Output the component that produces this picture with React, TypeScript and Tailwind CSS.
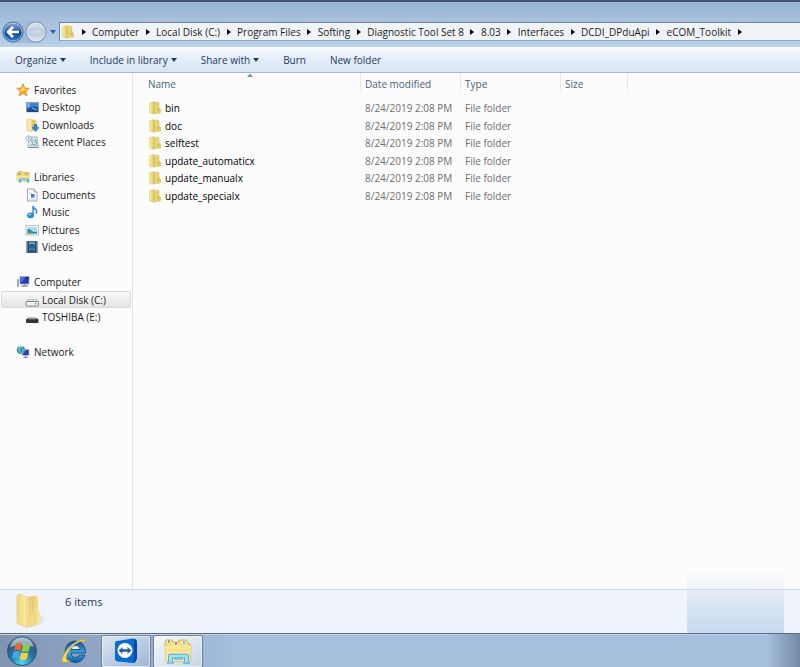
import React from "react";

type IconProps = { className?: string };

function FolderIcon({ className = "" }: IconProps) {
  return (
    <svg viewBox="0 0 14 14" className={className} aria-hidden="true">
      <defs>
        <linearGradient id="folderFront" x1="0" y1="0" x2="1" y2="0">
          <stop offset="0" stopColor="#faf3ae" />
          <stop offset="1" stopColor="#d6bd4c" />
        </linearGradient>
        <linearGradient id="folderBack" x1="0" y1="0" x2="1" y2="0">
          <stop offset="0" stopColor="#f2e58c" />
          <stop offset="1" stopColor="#dcc45c" />
        </linearGradient>
      </defs>
      <path d="M6 1.500 L10 1 L11 2 L11 7 L12.500 8 L12.500 12 L6 12.800Z" fill="url(#folderBack)" stroke="#d3be62" strokeWidth="0.500" />
      <path d="M9 9 H11" stroke="#c3a848" strokeWidth="1" fill="none" />
      <path d="M1.500 1.800 L5.500 .6 L7 1.500 L7 12.500 L6 13.300 L1.500 12Z" fill="url(#folderFront)" stroke="#d6c368" strokeWidth="0.500" />
    </svg>
  );
}

function BigFolderIcon({ className = "" }: IconProps) {
  return (
    <svg viewBox="0 0 32 36" className={className} aria-hidden="true">
      <defs>
        <linearGradient id="bigFront" x1="0" y1="0" x2="1" y2="0">
          <stop offset="0" stopColor="#f3d77b" />
          <stop offset="1" stopColor="#fbeeb5" />
        </linearGradient>
        <linearGradient id="bigBack" x1="0" y1="0" x2="1" y2="1">
          <stop offset="0" stopColor="#e6c665" />
          <stop offset="1" stopColor="#fbeaa6" />
        </linearGradient>
        <linearGradient id="bigShade" x1="0" y1="0" x2="1" y2="0">
          <stop offset="0" stopColor="#8b95a5" stopOpacity="0.700" />
          <stop offset="1" stopColor="#c8d0dc" stopOpacity="0" />
        </linearGradient>
      </defs>
      <path d="M20 24 L26 22 L32 27 L22 32 L14 34Z" fill="url(#bigShade)" />
      <path d="M11 4 L20 2.500 L22 5 L22 18 L24 20 L24 29 L22 32 L12 33Z" fill="url(#bigBack)" />
      <path d="M17 6 V20 L19 22 V31" stroke="#e2c468" strokeWidth="0.800" fill="none" />
      <path d="M1 3 L3 1 L11 4 L13 6 L13 34 L11 35 L1 30Z" fill="url(#bigFront)" stroke="#e3c568" strokeWidth="0.600" />
      <path d="M11 6 V34" stroke="#e2bf60" strokeWidth="0.800" />
    </svg>
  );
}

function StarIcon({ className = "" }: IconProps) {
  return (
    <svg viewBox="0 0 14 14" className={className} aria-hidden="true">
      <path d="M7 .8 L8.700 5 L13.300 5.300 L9.800 8.300 L11 13 L7 10.500 L3 13 L4.200 8.300 L.7 5.300 L5.300 5Z" fill="#f9a929" stroke="#ea8a28" strokeWidth="0.800" strokeLinejoin="round" />
      <path d="M7 3 L8 6 L10.500 6.300 L6 8.500 L3.500 6.300 L6 6Z" fill="#fde27c" />
    </svg>
  );
}

function DesktopIcon({ className = "" }: IconProps) {
  return (
    <svg viewBox="0 0 14 14" className={className} aria-hidden="true">
      <rect x="1.500" y="2.500" width="12" height="9.500" fill="#1c55a6" stroke="#7d99bd" strokeWidth="0.600" />
      <path d="M2 3 H13 V7 Q8 5 2 9Z" fill="#3f86d5" />
      <path d="M2.500 4 H4.500 M2.500 6 H4.500" stroke="#d6ecff" />
      <path d="M2 11 H13" stroke="#173765" strokeWidth="1.200" />
      <path d="M7 8 L12 10" stroke="#83bdf0" />
    </svg>
  );
}

function DownloadsIcon({ className = "" }: IconProps) {
  return (
    <svg viewBox="0 0 14 14" className={className} aria-hidden="true">
      <path d="M5 2 L10 1.500 L11.500 3 V12 L5 13Z" fill="#e6c85e" />
      <path d="M2 1.500 L6 1 L7 2 V13.500 L2 12.500Z" fill="#faebad" stroke="#d8b95a" strokeWidth="0.600" />
      <path d="M9 6.500 H12 V9.500 H14 L10.500 13.500 L7 9.500 H9Z" fill="#2589dc" stroke="#165ba5" strokeWidth="0.500" />
    </svg>
  );
}

function RecentIcon({ className = "" }: IconProps) {
  return (
    <svg viewBox="0 0 14 14" className={className} aria-hidden="true">
      <path d="M4 2 H12 L13.500 12.500 H3Z" fill="#dfe8ed" stroke="#8b9aa5" strokeWidth="0.700" />
      <path d="M7 4 L7 8 L10 11 M10 4 L10 8 M5 10 H12" stroke="#81a5b8" strokeWidth="1" fill="none" />
      <path d="M10.500 5 L11.500 9" stroke="#65ab79" />
      <circle cx="3.500" cy="3.500" r="2.700" fill="#eef5f8" stroke="#8ba2ac" strokeWidth="0.800" />
      <path d="M3.500 2 V3.700 H5" stroke="#547282" strokeWidth="0.600" fill="none" />
      <path d="M3 12.500 H13" stroke="#7e878c" />
    </svg>
  );
}

function LibrariesIcon({ className = "" }: IconProps) {
  return (
    <svg viewBox="0 0 14 14" className={className} aria-hidden="true">
      <path d="M1 3 L2 1.500 H6 L7 2.500 H13 V11 H1Z" fill="#f0d876" stroke="#c9ad4c" strokeWidth="0.600" />
      <path d="M2 4 H5" stroke="#63b061" strokeWidth="1.200" />
      <path d="M9 4 H12" stroke="#de8854" strokeWidth="1" />
      <path d="M1 6 H13 V11.500 H1Z" fill="#f6e594" />
      <path d="M4 12.500 V9.500 H12 V12.500" stroke="#4aafd2" strokeWidth="2.200" fill="none" />
      <path d="M4 9.500 H12" stroke="#a5e3f3" strokeWidth="0.800" />
    </svg>
  );
}

function DocumentIcon({ className = "" }: IconProps) {
  return (
    <svg viewBox="0 0 14 14" className={className} aria-hidden="true">
      <path d="M2.500 1 H9 L12 4 V13 H2.500Z" fill="#fbfcfe" stroke="#8193a8" strokeWidth="0.800" />
      <path d="M9 1 V4 H12" fill="#d4dfeb" stroke="#8193a8" strokeWidth="0.700" />
      <path d="M4 5 H7 M4 11 H10" stroke="#b1c6dd" strokeWidth="0.800" />
      <rect x="6" y="6" width="3.500" height="3.500" fill="#3978bd" />
    </svg>
  );
}

function MusicIcon({ className = "" }: IconProps) {
  return (
    <svg viewBox="0 0 14 14" className={className} aria-hidden="true">
      <ellipse cx="5.500" cy="10.300" rx="3.500" ry="2.900" fill="#1f88d2" />
      <ellipse cx="4.700" cy="9.500" rx="1.600" ry="1" fill="#8cd1f6" />
      <path d="M8 10 V1 Q8.700 3.500 10.800 4.500 Q12.500 6 10.800 8.500" stroke="#2d8ed3" strokeWidth="1.500" fill="none" />
    </svg>
  );
}

function PictureIcon({ className = "" }: IconProps) {
  return (
    <svg viewBox="0 0 14 14" className={className} aria-hidden="true">
      <rect x="1" y="2.500" width="12.500" height="9.500" fill="#fff" stroke="#8fa5b8" strokeWidth="0.700" />
      <rect x="2.500" y="4" width="9.500" height="6.500" fill="#a4daf3" />
      <path d="M2.500 6 Q5 6 7 8 T12 8.500 V10.500 H2.500Z" fill="#28789a" />
      <path d="M2.500 8.500 Q6 7.500 9 10.500 H2.500Z" fill="#4a9e74" />
    </svg>
  );
}

function VideoIcon({ className = "" }: IconProps) {
  return (
    <svg viewBox="0 0 14 14" className={className} aria-hidden="true">
      <rect x="1.500" y="1" width="11" height="12" fill="#263d55" />
      <rect x="4" y="1.500" width="6" height="5" fill="#5ba4d9" />
      <rect x="4" y="7.500" width="6" height="5" fill="#347bb4" />
      <path d="M4 5 L7 3.500 L10 5.500 V6.500 H4Z M4 11 L7 9.500 L10 11.500 V12.500 H4Z" fill="#28577d" />
      <path d="M2.700 1.500 V13 M11.300 1.500 V13" stroke="#b8cad9" strokeWidth="1" strokeDasharray="1 1" />
    </svg>
  );
}

function ComputerIcon({ className = "" }: IconProps) {
  return (
    <svg viewBox="0 0 14 14" className={className} aria-hidden="true">
      <rect x="1" y="4" width="2" height="8" fill="#a5adb9" />
      <path d="M1.500 6 H2.500" stroke="#596474" strokeWidth="0.700" />
      <rect x="4" y="1.500" width="9" height="7.500" fill="#293eb3" stroke="#9aa9c3" strokeWidth="0.700" />
      <path d="M4.500 2 H10 L5 8Z" fill="#5269d5" />
      <path d="M9 2 H12.500 V5Z" fill="#1b268a" />
      <path d="M8.500 9 V10.500 M5.500 11 H12" stroke="#8d98a9" strokeWidth="1.300" />
    </svg>
  );
}

function DiskIcon({ className = "" }: IconProps) {
  return (
    <svg viewBox="0 0 14 14" className={className} aria-hidden="true">
      <path d="M3 6.500 H11.500 L13.500 9 H1Z" fill="#e1e3e5" stroke="#a4a7aa" strokeWidth="0.600" />
      <rect x="1" y="8.500" width="12.500" height="4.500" rx="0.800" fill="#f4f4f4" stroke="#77797c" strokeWidth="0.900" />
      <path d="M9.500 10.800 H12" stroke="#4da35a" strokeWidth="0.900" />
    </svg>
  );
}

function UsbDiskIcon({ className = "" }: IconProps) {
  return (
    <svg viewBox="0 0 14 14" className={className} aria-hidden="true">
      <path d="M3 7.500 H11.500 L13.500 9.500 H1Z" fill="#909294" />
      <rect x="1" y="9" width="12.500" height="4" rx="1" fill="#303234" />
      <path d="M3 9.500 H11" stroke="#66696b" strokeWidth="0.700" />
    </svg>
  );
}

function NetworkIcon({ className = "" }: IconProps) {
  return (
    <svg viewBox="0 0 14 14" className={className} aria-hidden="true">
      <circle cx="5" cy="5" r="4.300" fill="#2589c9" />
      <path d="M1 4 Q4 -1 6 2 L4 6 L7 8 L4 9Z" fill="#61bb8d" />
      <path d="M3 2 Q5 .5 7 2" stroke="#b7e8f3" fill="none" />
      <rect x="6.500" y="4.500" width="6.500" height="6" fill="#2740ad" stroke="#b2bfd5" strokeWidth="0.700" />
      <path d="M7 5 H10 L7 9Z" fill="#6887df" />
      <path d="M9.500 11 V12 M7.500 12.500 H12" stroke="#77869f" strokeWidth="1.200" />
    </svg>
  );
}

function NavOrb({ forward = false }: { forward?: boolean }) {
  return (
    <svg viewBox="0 0 22 22" className="size-[22px]" aria-hidden="true">
      <defs>
        <linearGradient id="backOrb" x1="0" y1="0" x2="0" y2="1">
          <stop offset="0" stopColor="#8fb3dc" />
          <stop offset="0.450" stopColor="#2d62ad" />
          <stop offset="0.500" stopColor="#0d3d91" />
          <stop offset="1" stopColor="#2a8ad8" />
        </linearGradient>
        <linearGradient id="forwardOrb" x1="0" y1="0" x2="0" y2="1">
          <stop offset="0" stopColor="#dde6f0" />
          <stop offset="0.500" stopColor="#b8c9dc" />
          <stop offset="1" stopColor="#dfe9f4" />
        </linearGradient>
      </defs>
      <circle cx="11" cy="11" r="10" fill={forward ? "url(#forwardOrb)" : "url(#backOrb)"} stroke={forward ? "#7c92ae" : "#4b6c9c"} strokeWidth="1" />
      <circle cx="11" cy="11" r="9" fill="none" stroke="#e5effa" strokeOpacity="0.700" strokeWidth="0.800" />
      {forward ? (
        <path d="M5 9.500 H11 V6 L17 11 L11 16 V12.500 H5Z" fill="#ccd9e6" stroke="#b5c5d6" strokeWidth="0.600" />
      ) : (
        <path d="M11 6 L6 11 L11 16 M6.500 11 H17" stroke="#fff" strokeWidth="2.600" fill="none" />
      )}
    </svg>
  );
}

function StartOrb() {
  return (
    <svg viewBox="0 0 32 32" className="size-8" aria-hidden="true">
      <defs>
        <radialGradient id="startOrb" cx="0.500" cy="0.900" r="0.900">
          <stop offset="0" stopColor="#50dbf5" />
          <stop offset="0.450" stopColor="#2376a4" />
          <stop offset="0.800" stopColor="#345878" />
          <stop offset="1" stopColor="#a4bdd0" />
        </radialGradient>
      </defs>
      <circle cx="16" cy="16" r="14.500" fill="url(#startOrb)" stroke="#375673" strokeWidth="1" />
      <path d="M4 12 Q7 3 16 3 Q25 3 28 12 Q16 8 4 12Z" fill="#d7e7f2" fillOpacity="0.600" />
      <path d="M10.300 8.500 Q13 7 16 8.800 L14.500 15.600 Q11.500 14 8 15.500Z" fill="#ee682d" />
      <path d="M17 9.300 Q20 11 24.500 9.300 L22.600 16.200 Q18.500 17.600 15.600 16Z" fill="#8ccc44" />
      <path d="M7.600 16.700 Q11.500 15.200 14.200 16.800 L12.500 23.500 Q9.500 22 5.800 23.300Z" fill="#45a6ea" />
      <path d="M15.300 17.200 Q18.500 18.800 22.300 17.400 L20.600 24.300 Q16.700 25.700 13.600 24Z" fill="#fdd03b" />
    </svg>
  );
}

function ExplorerBrowserIcon() {
  return (
    <svg viewBox="0 0 28 28" className="size-7" aria-hidden="true">
      <defs>
        <linearGradient id="browserBlue" x1="0" y1="0" x2="0" y2="1">
          <stop offset="0" stopColor="#124f96" />
          <stop offset="0.550" stopColor="#3ba9e4" />
          <stop offset="1" stopColor="#0f59a5" />
        </linearGradient>
      </defs>
      <path
        fillRule="evenodd"
        d="M15 4 Q25.500 4.500 25.500 16 H11 Q11.500 20.500 15.500 20.500 Q18.500 20.500 19.500 18 H25 Q22.500 25.500 15 25.500 Q5 24.500 5 14.500 Q5.500 5 15 4Z M11 12.500 H20 Q19.500 8.500 15.500 8.500 Q11.500 8.500 11 12.500Z"
        fill="url(#browserBlue)"
        stroke="#123f78"
        strokeWidth="0.800"
      />
      <path d="M11.500 12 H19.500 Q19 9 15.500 9 Q12 9 11.500 12Z" fill="#dceaf7" />
      <path d="M26 5 Q25 1 20 3 Q12 6 6 14 Q0 23 3 25.500 Q6 26 10 23.500 Q4.500 24 7 17 Q12 8 20 4.500 Q24 3.500 26 5Z" fill="#f5d853" stroke="#c7a036" strokeWidth="0.700" />
    </svg>
  );
}

function RemoteIcon() {
  return (
    <svg viewBox="0 0 26 28" className="h-7 w-[26px]" aria-hidden="true">
      <path d="M2 6 Q2 4 4 4 L20 1.500 Q23 1 23 4 V23 Q23 26 20 26 L5 24.500 Q2 24 2 21.500Z" fill="#0a6bd0" />
      <path d="M21 2 Q24 2 24 5 V22 L21 26Z" fill="#064d9e" />
      <circle cx="12" cy="13.500" r="7.500" fill="#fff" />
      <path d="M5.500 13.500 L9.700 10 L9.300 12.300 H14.700 L14.300 10 L18.500 13.500 L14.300 17 L14.700 14.700 H9.300 L9.700 17Z" fill="#1b5fa8" />
    </svg>
  );
}

function FileManagerIcon() {
  return (
    <svg viewBox="0 0 30 28" className="h-7 w-[30px]" aria-hidden="true">
      <path d="M2 7 L3 3 H9 L10 5 H16 V3 H23 L25 5 V7 L28 8 L27 24 H3Z" fill="#f4df85" stroke="#c5a64c" strokeWidth="0.800" />
      <path d="M4 4.500 H8" stroke="#fbf7e0" strokeWidth="2" />
      <path d="M5 4.500 H7" stroke="#4ba24f" strokeWidth="2" />
      <path d="M11 6.500 H15" stroke="#fbf7e0" strokeWidth="2" />
      <path d="M12 6.500 H14" stroke="#dc4c3b" strokeWidth="2" />
      <path d="M18 5.500 H23" stroke="#fbf7e0" strokeWidth="2" />
      <path d="M20 5.500 H22" stroke="#59a7db" strokeWidth="2" />
      <path d="M2 9 L28 8 L27 24 H3Z" fill="#fae999" />
      <path d="M3 13 H27" stroke="#e9ca6c" strokeWidth="0.700" />
      <path d="M7.500 25 V19 H23.500 V25" fill="none" stroke="#3e9dc9" strokeWidth="4.500" strokeLinejoin="round" />
      <path d="M7.500 25 V19 H23.500 V25" fill="none" stroke="#9de1f5" strokeWidth="3" strokeLinejoin="round" />
      <path d="M4 26 H11 M20 26 H27 M11 22 H20" stroke="#5dbbdc" strokeWidth="1.600" />
    </svg>
  );
}

function DownArrow() {
  return (
    <svg viewBox="0 0 6 4" className="h-1 w-[6px]" aria-hidden="true">
      <path d="M0 0 H6 L3 4Z" fill="currentColor" />
    </svg>
  );
}

const crumbs = [
  "Computer",
  "Local Disk (C:)",
  "Program Files",
  "Softing",
  "Diagnostic Tool Set 8",
  "8.03",
  "Interfaces",
  "DCDI_DPduApi",
  "eCOM_Toolkit",
];

const commands = [
  { label: "Organize", menu: true },
  { label: "Include in library", menu: true },
  { label: "Share with", menu: true },
  { label: "Burn", menu: false },
  { label: "New folder", menu: false },
];

type Place = { label: string; Icon: React.FC<IconProps>; root?: boolean; current?: boolean } | null;

const places: Place[] = [
  { label: "Favorites", Icon: StarIcon, root: true },
  { label: "Desktop", Icon: DesktopIcon },
  { label: "Downloads", Icon: DownloadsIcon },
  { label: "Recent Places", Icon: RecentIcon },
  null,
  { label: "Libraries", Icon: LibrariesIcon, root: true },
  { label: "Documents", Icon: DocumentIcon },
  { label: "Music", Icon: MusicIcon },
  { label: "Pictures", Icon: PictureIcon },
  { label: "Videos", Icon: VideoIcon },
  null,
  { label: "Computer", Icon: ComputerIcon, root: true },
  { label: "Local Disk (C:)", Icon: DiskIcon, current: true },
  { label: "TOSHIBA (E:)", Icon: UsbDiskIcon },
  null,
  { label: "Network", Icon: NetworkIcon, root: true },
];

const folders = ["bin", "doc", "selftest", "update_automaticx", "update_manualx", "update_specialx"];

function AddressBar() {
  return (
    <div className="flex h-[19px] items-center pl-[2px]">
      <div className="flex shrink-0 items-center gap-[1px] rounded-full bg-[#a3bad5]">
        <button aria-label="Back" className="rounded-full"><NavOrb /></button>
        <button aria-label="Forward" className="rounded-full"><NavOrb forward /></button>
      </div>
      <button aria-label="Recent pages" className="flex w-3 shrink-0 justify-center text-[#2c5f97]">
        <DownArrow />
      </button>
      <nav aria-label="Address" className="flex h-[19px] min-w-0 flex-1 items-center overflow-hidden border border-r-0 border-t-[#71849a] border-b-[#92a7bf] border-l-[#71849a] bg-[#f0f4f9] pl-[1px]">
        <FolderIcon className="size-[14px] shrink-0" />
        <ol className="flex items-center">
          <li className="flex w-[17px] justify-center text-black"><Chevron /></li>
          {crumbs.map((crumb) => (
            <li key={crumb} className="flex items-center whitespace-nowrap text-[#1c1c1c]">
              <a href="#" className="leading-4">{crumb}</a>
              <span className="flex w-[17px] justify-center text-black"><Chevron /></span>
            </li>
          ))}
        </ol>
      </nav>
    </div>
  );
}

function Chevron() {
  return (
    <svg viewBox="0 0 4 6" className="h-[6px] w-1" aria-hidden="true">
      <path d="M0 0 L4 3 L0 6Z" fill="currentColor" />
    </svg>
  );
}

function Sidebar() {
  return (
    <nav aria-label="Places" className="w-[133px] shrink-0 border-r border-[#dbe6f3] pt-2">
      <ul>
        {places.map((place, index) => (
          <li key={index} className="flex odd:h-[17px] even:h-[18px]">
            {place && (
              <a
                href="#"
                className={`mx-[1px] flex flex-1 items-center rounded-[2px] border whitespace-nowrap text-[#1a1a1a] ${
                  place.current ? "border-[#d9d9d9] bg-linear-to-b from-[#f8f8f8] to-[#e5e5e5]" : "border-transparent"
                } ${place.root ? "gap-1 pl-[14px]" : "gap-[3px] pl-[23px]"}`}
              >
                <place.Icon className="size-[14px] shrink-0" />
                {place.label}
              </a>
            )}
          </li>
        ))}
      </ul>
    </nav>
  );
}

function FileList() {
  const heading = "h-[26px] p-0 text-left align-top font-normal text-[#4c607a]";
  const cell = "flex h-[17px] items-center border-r border-[#e3e8ee]";
  return (
    <main className="min-w-0 flex-1 overflow-hidden">
      <table className="w-[495px] table-fixed border-collapse whitespace-nowrap">
        <colgroup>
          <col className="w-[228px]" />
          <col className="w-[100px]" />
          <col className="w-[100px]" />
          <col className="w-[67px]" />
        </colgroup>
        <thead>
          <tr>
            <th scope="col" aria-sort="ascending" className={heading}>
              <div className={`${cell} relative pt-[5px] pl-[15px]`}>
                Name
                <svg viewBox="0 0 6 4" className="absolute top-0 left-1/2 h-1 w-[6px]" aria-hidden="true">
                  <path d="M0 4 L3 .5 L6 4Z" fill="#7495b5" />
                </svg>
              </div>
            </th>
            <th scope="col" className={heading}><div className={`${cell} pt-[5px] pl-1`}>Date modified</div></th>
            <th scope="col" className={heading}><div className={`${cell} pt-[5px] pl-1`}>Type</div></th>
            <th scope="col" className={heading}><div className={`${cell} pt-[5px] pl-1`}>Size</div></th>
          </tr>
        </thead>
        <tbody>
          {folders.map((name) => (
            <tr key={name} className="text-[#6d6d6d] odd:h-[18px] even:h-[17px]">
              <td className="p-0 pl-[15px] text-black">
                <span className="flex items-center gap-[3px]">
                  <FolderIcon className="size-[14px] shrink-0" />
                  {name}
                </span>
              </td>
              <td className="p-0 pl-1">8/24/2019 2:08 PM</td>
              <td className="p-0 pl-1">File folder</td>
              <td className="p-0" />
            </tr>
          ))}
        </tbody>
      </table>
    </main>
  );
}

function Taskbar() {
  const active = "flex h-[33px] w-[50px] items-center justify-center rounded-[2px] border border-[#6b7f99] bg-linear-to-br shadow-[inset_0_0_0_1px_#ffffff90]";
  return (
    <footer className="flex h-[34px] shrink-0 border-t border-[#5c6b80] bg-linear-to-r from-[#8195b3] via-[#a5bfdd] via-30% to-[#a5bfdd]">
      <div className="flex min-w-0 flex-1 items-center border-t border-[#c5d3e3] pl-[6px]">
        <button aria-label="Start"><StartOrb /></button>
        <button aria-label="Web browser" className="mr-[13px] ml-[22px]"><ExplorerBrowserIcon /></button>
        <button aria-label="Remote support" className={`${active} from-[#dce6f2] to-[#9fb6d3]`}><RemoteIcon /></button>
        <button aria-label="File manager" className={`${active} ml-[2px] from-[#f5f8fc] to-[#c6d4e6]`}><FileManagerIcon /></button>
      </div>
      <div className="w-8 bg-linear-to-r from-[#a5bfdd] to-[#7589a5]" />
    </footer>
  );
}

export default function App() {
  return (
    <div className="relative flex h-screen flex-col overflow-hidden bg-[#fcfcfc] font-['Open_Sans','Noto_Sans',sans-serif] text-[10px] leading-[14px]">
      <header className="shrink-0 border-t-2 border-[#42566f] bg-linear-to-b from-[#99b4d3] to-[#b9d1ea] pt-5 pb-[6px]">
        <AddressBar />
      </header>
      <div role="toolbar" aria-label="Commands" className="flex h-[26px] shrink-0 items-center gap-6 border-b border-[#a9b9cd] bg-linear-to-b from-[#fafcff] from-0% via-[#e3edf9] via-50% to-[#dbe5f3] pl-[15px] text-[#1e395b]">
        {commands.map(({ label, menu }) => (
          <button key={label} className="flex items-center gap-[3px] whitespace-nowrap">
            {label}
            {menu && <DownArrow />}
          </button>
        ))}
      </div>
      <div className="flex min-h-0 flex-1">
        <Sidebar />
        <FileList />
      </div>
      <section aria-label="Details" className="flex h-11 shrink-0 border-t border-[#cfdae6] bg-[#eff3fb] pl-4 text-[11px] text-[#1e395b]">
        <BigFolderIcon className="mt-[3px] mr-[17px] h-9 w-8" />
        <p className="pt-[5px]">6 items</p>
      </section>
      <Taskbar />
      <div className="absolute right-4 bottom-[34px] h-[64px] w-[97px] bg-linear-to-b from-[#a9c8e800] via-[#b4c8dd38] via-40% to-[#a9c8e898]" />
    </div>
  );
}
